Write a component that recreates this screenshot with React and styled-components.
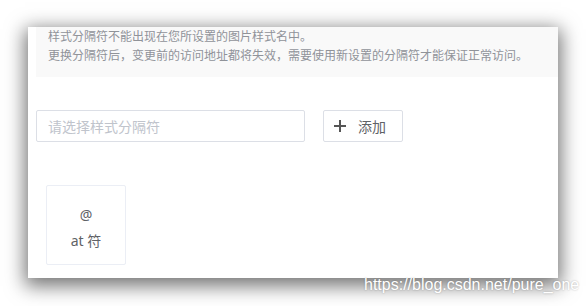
import React from "react";
import styled, { createGlobalStyle } from "styled-components";

const Global = createGlobalStyle`
  html, body {
    margin: 0;
    background: #fff;
  }
  body {
    font-family: "Noto Sans", "Noto Sans CJK SC", sans-serif;
  }
`;

const Page = styled.div`
  position: relative;
  width: 586px;
  height: 306px;
  padding: 27px 0 0 28px;
  box-sizing: border-box;
  overflow: hidden;
`;

const Card = styled.div`
  width: 530px;
  height: 251px;
  background: #fff;
  box-shadow: 0 5px 18px 3px rgba(0, 0, 0, 0.55);
  padding-left: 8px;
  box-sizing: border-box;
  overflow: hidden;
`;

const Notice = styled.div`
  background: #f9f9f9;
  padding: 0 12px 12px;
  font-size: 12px;
  line-height: 19px;
  color: #909399;
`;

const Row = styled.div`
  display: flex;
  align-items: center;
  gap: 18px;
  margin-top: 33px;
`;

const Input = styled.input`
  width: 269px;
  height: 32px;
  box-sizing: border-box;
  border: 1px solid #dcdfe6;
  border-radius: 2px;
  padding: 0 11px;
  font-family: inherit;
  font-size: 14px;
  color: #606266;
  outline: none;
  &::placeholder {
    color: #c0c4cc;
  }
`;

const Button = styled.button`
  width: 80px;
  height: 32px;
  box-sizing: border-box;
  border: 1px solid #dcdfe6;
  border-radius: 2px;
  background: #fff;
  display: flex;
  align-items: center;
  justify-content: center;
  gap: 12px;
  padding: 0 6px 0 0;
  font-family: inherit;
  font-size: 14px;
  color: #606266;
`;

const Tiles = styled.div`
  display: flex;
  gap: 12px;
  margin: 43px 0 0 10px;
`;

const Tile = styled.div`
  width: 80px;
  height: 80px;
  box-sizing: border-box;
  border: 1px solid #ebeef5;
  border-radius: 2px;
  padding-top: 16px;
  display: flex;
  flex-direction: column;
  align-items: center;
  font-size: 14px;
  line-height: 26px;
  color: #606266;
`;

const Watermark = styled.div`
  position: absolute;
  left: 364px;
  top: 276px;
  font-family: "Liberation Sans", Arial, sans-serif;
  font-size: 16px;
  color: #fff;
  text-shadow: 0 0 2px rgba(0, 0, 0, 0.3);
  white-space: nowrap;
`;

const Plus = () => (
  <svg width="12" height="12" viewBox="0 0 12 12">
    <path d="M6 0v12M0 6h12" stroke="#555" strokeWidth="2" />
  </svg>
);

const separators = [{ sign: "@", name: "at 符" }];

export default function App() {
  return (
    <>
      <Global />
      <Page>
        <Card>
          <Notice>
            <div>样式分隔符不能出现在您所设置的图片样式名中。</div>
            <div>更换分隔符后，变更前的访问地址都将失效，需要使用新设置的分隔符才能保证正常访问。</div>
          </Notice>
          <Row>
            <Input placeholder="请选择样式分隔符" />
            <Button>
              <Plus />
              添加
            </Button>
          </Row>
          <Tiles>
            {separators.map((s) => (
              <Tile key={s.sign}>
                <span>{s.sign}</span>
                <span>{s.name}</span>
              </Tile>
            ))}
          </Tiles>
        </Card>
        <Watermark>https://blog.csdn.net/pure_one</Watermark>
      </Page>
    </>
  );
}
